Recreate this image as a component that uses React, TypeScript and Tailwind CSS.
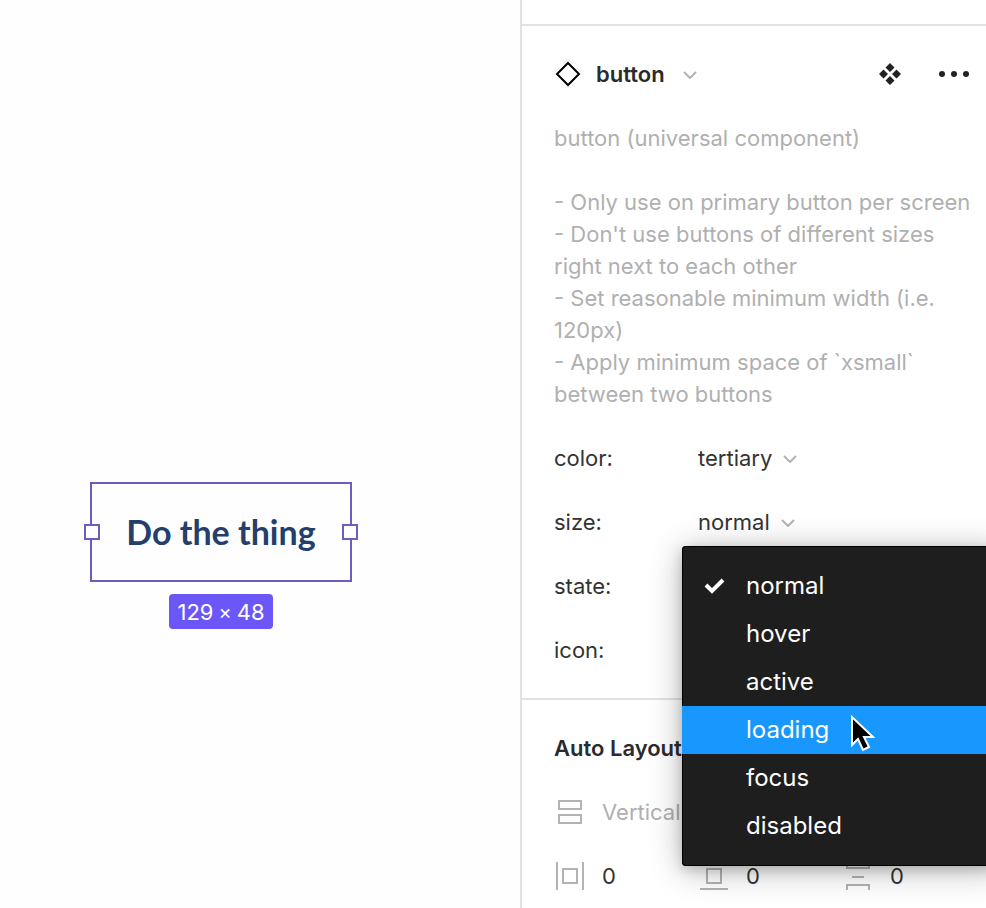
import React, { useState } from "react";

function Chevron() {
  return (
    <svg viewBox="0 0 14 10" className="pointer-events-none h-[10px] w-[14px] shrink-0" fill="none" stroke="#b3b3b3" strokeWidth="2" aria-hidden="true">
      <path d="M1 3l6 6 6-6" />
    </svg>
  );
}

type PropertyRowProps = { id: string; label: string; children: React.ReactNode };

function PropertyRow({ id, label, children }: PropertyRowProps) {
  return (
    <div className="relative flex h-16 items-center">
      <label htmlFor={id} className="w-36 shrink-0">
        {label}
      </label>
      {children}
    </div>
  );
}

type PickerProps = { id: string; value: string; options: string[] };

function Picker({ id, value, options }: PickerProps) {
  return (
    <div className="flex items-center gap-[11px]">
      <select id={id} defaultValue={value} className="field-sizing-content appearance-none bg-transparent outline-none">
        {options.map((option) => (
          <option key={option}>{option}</option>
        ))}
      </select>
      <Chevron />
    </div>
  );
}

const states = ["normal", "hover", "active", "loading", "focus", "disabled"];

function StateMenu() {
  const [selected, setSelected] = useState("normal");
  const hovered = "loading";
  return (
    <div
      role="listbox"
      aria-label="state"
      className="absolute -top-2 left-32 z-10 w-80 rounded bg-[#1e1e1e] py-4 text-2xl text-white shadow-[0_4px_32px_rgba(0,0,0,0.3),0_4px_12px_rgba(0,0,0,0.15),inset_0_0_0_1px_#000]"
    >
      {states.map((state) => (
        <button
          key={state}
          type="button"
          role="option"
          aria-selected={state === selected}
          onClick={() => setSelected(state)}
          className={`flex h-12 w-full items-center pl-5 text-left ${state === hovered ? "bg-[#1897fe]" : ""}`}
        >
          <span className="w-11">
            {state === selected && (
              <svg viewBox="0 0 24 24" className="size-6" fill="none" stroke="#fff" strokeWidth="4" aria-hidden="true">
                <path d="M4 11l6 6L21 6" />
              </svg>
            )}
          </span>
          {state}
        </button>
      ))}
      <svg viewBox="0 0 26 40" className="pointer-events-none absolute left-[168px] top-[167px] h-10 w-[26px]" aria-hidden="true">
        <path d="M2 4v28l6-6 5 11 6-3-5-10h9z" fill="#000" stroke="#fff" strokeWidth="2" />
      </svg>
    </div>
  );
}

function Selection() {
  return (
    <div className="absolute left-[90px] top-[482px] flex flex-col items-center gap-3">
      <div className="relative flex h-[100px] w-[262px] items-center justify-center border-2 border-[#6e5cc0]">
        <button type="button" className="whitespace-nowrap font-[Lato,sans-serif] text-[34px] font-bold text-[#243f6b]">
          Do the thing
        </button>
        <span className="absolute -left-2 top-10 size-4 border-2 border-[#6e5cc0] bg-white" />
        <span className="absolute -right-2 top-10 size-4 border-2 border-[#6e5cc0] bg-white" />
      </div>
      <div className="flex h-[35px] items-center gap-[5px] rounded bg-[#6b57f8] px-2 text-[22px] text-white">
        <span>129</span>
        <span className="text-xl">×</span>
        <span>48</span>
      </div>
    </div>
  );
}

type SpacingFieldProps = { label: string; children: React.ReactNode };

function SpacingField({ label, children }: SpacingFieldProps) {
  return (
    <label className="flex w-36 items-center gap-4">
      <svg viewBox="0 0 32 32" className="size-8 shrink-0" fill="none" stroke="#b3b3b3" strokeWidth="2" aria-hidden="true">
        {children}
      </svg>
      <input type="text" defaultValue="0" aria-label={label} className="w-16 bg-transparent outline-none" />
    </label>
  );
}

export default function App() {
  return (
    <div className="flex min-h-screen overflow-hidden bg-white font-[Inter,sans-serif] text-[22px] leading-8 text-[#333]">
      <main className="relative flex-1 bg-[#fefefe]">
        <Selection />
      </main>
      <aside className="w-[466px] shrink-0 border-l-2 border-[#e2e2e2]">
        <div className="h-[26px] border-b-2 border-[#e2e2e2]" />
        <section className="border-b-2 border-[#e2e2e2] pb-4 pl-8">
          <header className="flex h-24 items-center pr-4">
            <svg viewBox="0 0 28 28" className="size-7" fill="none" stroke="#000" strokeWidth="2" aria-hidden="true">
              <path d="M14 3l11 11-11 11L3 14z" />
            </svg>
            <button type="button" className="ml-[14px] flex items-center gap-[18px] font-semibold text-[#2b2b2b]">
              button
              <Chevron />
            </button>
            <button type="button" aria-label="Go to main component" className="ml-auto">
              <svg viewBox="0 0 48 48" className="size-6" fill="#222" aria-hidden="true">
                <path d="M24 2l9 9-9 9-9-9zM24 28l9 9-9 9-9-9zM11 15l9 9-9 9-9-9zM37 15l9 9-9 9-9-9z" />
              </svg>
            </button>
            <button type="button" aria-label="More options" className="ml-9">
              <svg viewBox="0 0 32 8" className="h-2 w-8" fill="#222" aria-hidden="true">
                <circle cx="4" cy="4" r="3" />
                <circle cx="16" cy="4" r="3" />
                <circle cx="28" cy="4" r="3" />
              </svg>
            </button>
          </header>
          <p className="whitespace-pre-line pb-4 text-[#b0b0b0]">
            {`button (universal component)

- Only use on primary button per screen
- Don't use buttons of different sizes right next to each other
- Set reasonable minimum width (i.e. 120px)
- Apply minimum space of \`xsmall\` between two buttons`}
          </p>
          <PropertyRow id="color" label="color:">
            <Picker id="color" value="tertiary" options={["primary", "secondary", "tertiary"]} />
          </PropertyRow>
          <PropertyRow id="size" label="size:">
            <Picker id="size" value="normal" options={["small", "normal", "large"]} />
          </PropertyRow>
          <PropertyRow id="state" label="state:">
            <Picker id="state" value="normal" options={states} />
            <StateMenu />
          </PropertyRow>
          <PropertyRow id="icon" label="icon:">
            <input id="icon" type="checkbox" />
          </PropertyRow>
        </section>
        <section className="py-4 pl-8">
          <h2 className="flex h-16 items-center font-semibold text-[#2b2b2b]">Auto Layout</h2>
          <div className="flex h-16 items-center gap-4 text-[#b0b0b0]">
            <svg viewBox="0 0 32 32" className="size-8" fill="none" stroke="#b3b3b3" strokeWidth="2" aria-hidden="true">
              <path d="M5 5h22v8H5zM5 19h22v8H5z" />
            </svg>
            <select aria-label="Direction" className="appearance-none bg-transparent outline-none">
              <option>Vertical</option>
            </select>
          </div>
          <div className="flex h-16 items-center">
            <SpacingField label="Horizontal padding">
              <path d="M3 2v28M29 2v28M9 9h14v14H9z" />
            </SpacingField>
            <SpacingField label="Vertical padding">
              <path d="M2 29h28M2 3h28M9 9h14v14H9z" />
            </SpacingField>
            <SpacingField label="Spacing between items">
              <path d="M5 2v6h22V2M10 17h12M5 30v-5h22v5" />
            </SpacingField>
          </div>
        </section>
      </aside>
    </div>
  );
}
